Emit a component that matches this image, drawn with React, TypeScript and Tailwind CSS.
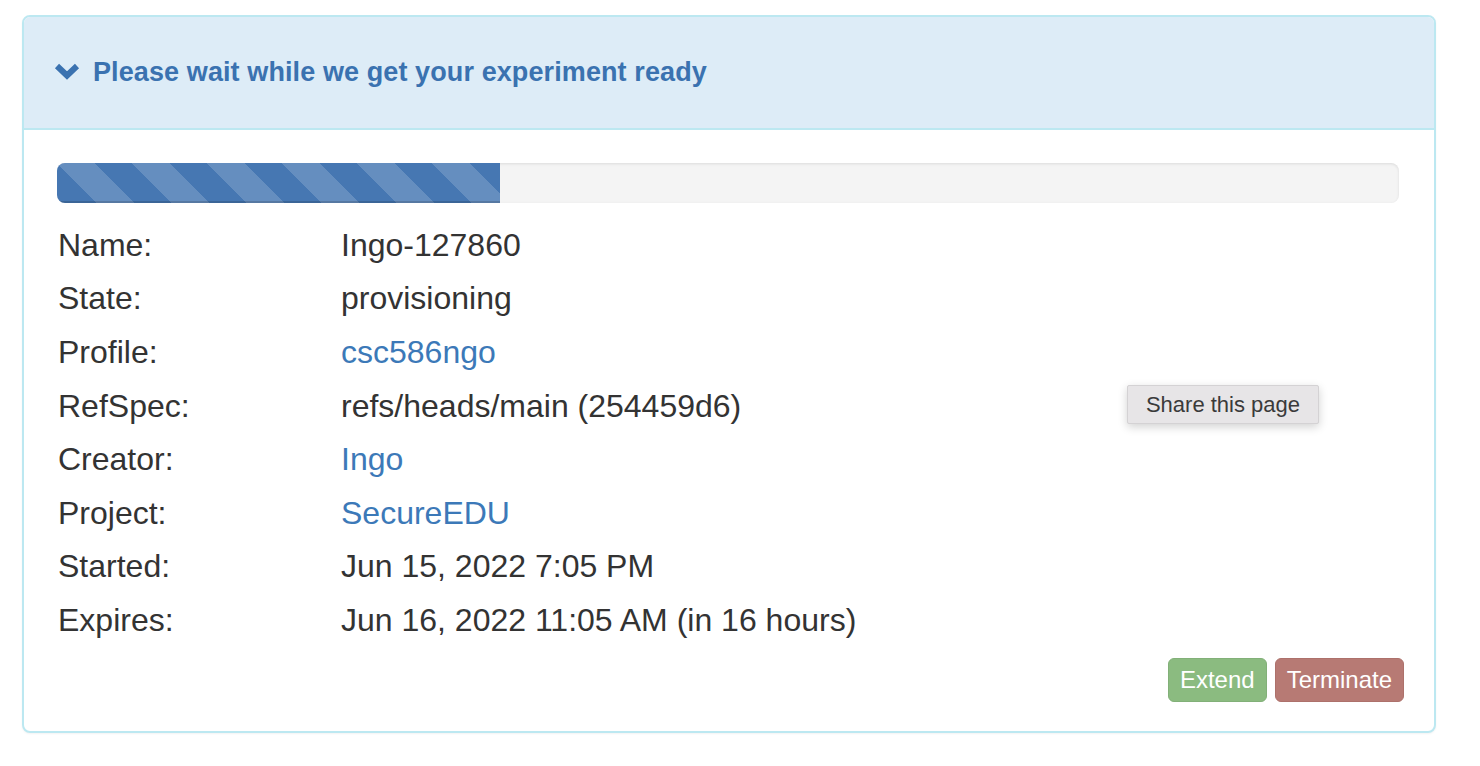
import React from "react";

const rows: { label: string; value: string; link?: boolean }[] = [
  { label: "Name:", value: "Ingo-127860" },
  { label: "State:", value: "provisioning" },
  { label: "Profile:", value: "csc586ngo", link: true },
  { label: "RefSpec:", value: "refs/heads/main (254459d6)" },
  { label: "Creator:", value: "Ingo", link: true },
  { label: "Project:", value: "SecureEDU", link: true },
  { label: "Started:", value: "Jun 15, 2022 7:05 PM" },
  { label: "Expires:", value: "Jun 16, 2022 11:05 AM (in 16 hours)" },
];

export default function App() {
  const progress = 33;

  return (
    <div className="min-h-screen bg-white pt-[15px] pl-[22px] pr-[44px] font-['Liberation_Sans',Arial,sans-serif]">
      <div className="rounded-[8px] border-2 border-[#bce8f1] bg-white shadow-[0_1px_2px_rgba(0,0,0,0.05)] overflow-hidden">
        {/* heading */}
        <div className="flex h-[113px] items-center gap-[13px] border-b-2 border-[#bce8f1] bg-[#ddecf7] pl-[30px] text-[#3a72b0]">
          <svg width="26" height="18" viewBox="0 0 26 18" className="mt-[-3px]">
            <polyline points="3,4 13,13.5 23,4" fill="none" stroke="currentColor" strokeWidth="6" strokeLinejoin="miter" strokeLinecap="butt" />
          </svg>
          <h3 className="text-[27px] font-bold tracking-[0.1px]">Please wait while we get your experiment ready</h3>
        </div>

        {/* body */}
        <div className="relative pl-[33px] pr-[35px] pt-[33px] pb-[29px]">
          <div className="h-[40px] overflow-hidden rounded-[8px] bg-[#f4f4f4] shadow-[inset_0_1px_3px_rgba(0,0,0,0.1)]">
            <div
              className="h-full bg-[#4677b2] bg-[linear-gradient(45deg,rgba(255,255,255,0.17)_25%,transparent_25%,transparent_50%,rgba(255,255,255,0.17)_50%,rgba(255,255,255,0.17)_75%,transparent_75%,transparent)] bg-[length:75px_75px] shadow-[inset_0_-2px_0_rgba(0,0,0,0.15)]"
              style={{ width: `${progress}%` }}
            />
          </div>

          <div className="mt-[15px] text-[32px] text-[#333333]">
            {rows.map((r) => (
              <div key={r.label} className="flex h-[53.6px] items-center">
                <div className="w-[284px] pl-[1px]">{r.label}</div>
                <div className={r.link ? "text-[#3c79b8]" : ""}>{r.value}</div>
              </div>
            ))}
          </div>

          <div className="-mr-[5px] mt-[11px] flex justify-end gap-[8px] text-[24px] text-white">
            <button className="h-[44px] rounded-[6px] border border-[#82b078] bg-[#8bbb80] px-[11px]">Extend</button>
            <button className="h-[44px] rounded-[6px] border border-[#ad716b] bg-[#b77a74] px-[11px]">Terminate</button>
          </div>

          <button className="absolute right-[115px] top-[255px] flex h-[39px] w-[192px] items-center justify-center rounded-[2px] border border-[#d4d2d4] bg-[#e7e5e7] text-[22px] text-[#3a3a3a] shadow-[0_3px_10px_rgba(0,0,0,0.18)]">
            Share this page
          </button>
        </div>
      </div>
    </div>
  );
}
